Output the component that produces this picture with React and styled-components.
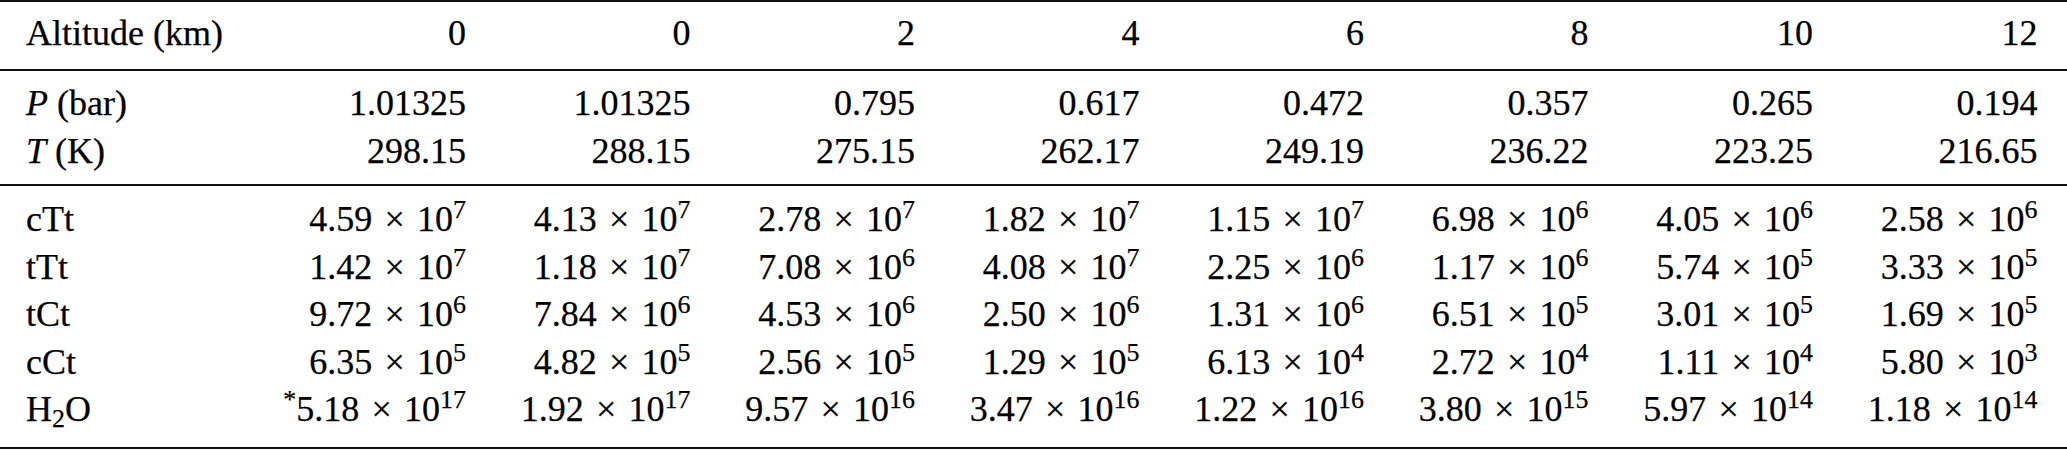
import React from 'react';
import styled, { createGlobalStyle } from 'styled-components';

const GlobalStyle = createGlobalStyle`
  html, body {
    margin: 0;
    padding: 0;
    background: #fff;
  }
`;

const Page = styled.div`
  width: 2067px;
  font-family: "Liberation Serif", "Times New Roman", serif;
  font-size: 36px;
  color: #000;
  border-top: 2px solid #111;
  border-bottom: 2px solid #111;
  box-sizing: border-box;
  -webkit-text-stroke: 0.25px #000;
`;

const Section = styled.div`
  display: grid;
  grid-template-columns: 215.5px repeat(8, 224.5px);
  padding: ${props => props.pad};
  padding-left: 26px;
  padding-right: 29.5px;
  line-height: ${props => props.lh || 48}px;
  border-bottom: ${props => props.ruled ? '2px solid #111' : 'none'};
`;

const Label = styled.div`
  text-align: left;
  white-space: nowrap;
`;

const Cell = styled.div`
  text-align: right;
  white-space: nowrap;
`;

const Sym = styled.i`
  font-style: italic;
  margin-right: 0.25em;
`;

const Sup = styled.sup`
  font-size: 0.72em;
  line-height: 0;
  vertical-align: 0.5em;
`;

const Sub = styled.sub`
  font-size: 0.72em;
  line-height: 0;
  vertical-align: -0.22em;
`;

const Times = styled.span`
  margin: 0 0.34em;
`;

const altitudes = ['0', '0', '2', '4', '6', '8', '10', '12'];
const pressure = ['1.01325', '1.01325', '0.795', '0.617', '0.472', '0.357', '0.265', '0.194'];
const temperature = ['298.15', '288.15', '275.15', '262.17', '249.19', '236.22', '223.25', '216.65'];

const species = [
  {
    name: 'cTt',
    values: [['4.59', 7], ['4.13', 7], ['2.78', 7], ['1.82', 7], ['1.15', 7], ['6.98', 6], ['4.05', 6], ['2.58', 6]],
  },
  {
    name: 'tTt',
    values: [['1.42', 7], ['1.18', 7], ['7.08', 6], ['4.08', 7], ['2.25', 6], ['1.17', 6], ['5.74', 5], ['3.33', 5]],
  },
  {
    name: 'tCt',
    values: [['9.72', 6], ['7.84', 6], ['4.53', 6], ['2.50', 6], ['1.31', 6], ['6.51', 5], ['3.01', 5], ['1.69', 5]],
  },
  {
    name: 'cCt',
    values: [['6.35', 5], ['4.82', 5], ['2.56', 5], ['1.29', 5], ['6.13', 4], ['2.72', 4], ['1.11', 4], ['5.80', 3]],
  },
  {
    name: 'H2O',
    values: [['5.18', 17, true], ['1.92', 17], ['9.57', 16], ['3.47', 16], ['1.22', 16], ['3.80', 15], ['5.97', 14], ['1.18', 14]],
  },
];

const Sci = ({ mantissa, exp, starred }) => (
  <Cell>
    {starred && <Sup>*</Sup>}
    {mantissa}
    <Times>×</Times>
    10<Sup>{exp}</Sup>
  </Cell>
);

const SpeciesName = ({ name }) => {
  if (name === 'H2O') {
    return <Label>H<Sub>2</Sub>O</Label>;
  }
  return <Label>{name}</Label>;
};

export default function App() {
  return (
    <>
      <GlobalStyle />
      <Page>
        <Section pad="7px 0 12px" ruled>
          <Label>Altitude (km)</Label>
          {altitudes.map((a, i) => <Cell key={`alt${i}`}>{a}</Cell>)}
        </Section>
        <Section pad="8px 0 9px" ruled>
          <Label><Sym>P</Sym>(bar)</Label>
          {pressure.map((p, i) => <Cell key={`p${i}`}>{p}</Cell>)}
          <Label><Sym>T</Sym>(K)</Label>
          {temperature.map((t, i) => <Cell key={`t${i}`}>{t}</Cell>)}
        </Section>
        <Section pad="10px 0 13px" lh={47.5}>
          {species.map(row => (
            <React.Fragment key={row.name}>
              <SpeciesName name={row.name} />
              {row.values.map(([m, e, s], i) => (
                <Sci key={`${row.name}${i}`} mantissa={m} exp={e} starred={s} />
              ))}
            </React.Fragment>
          ))}
        </Section>
      </Page>
    </>
  );
}
